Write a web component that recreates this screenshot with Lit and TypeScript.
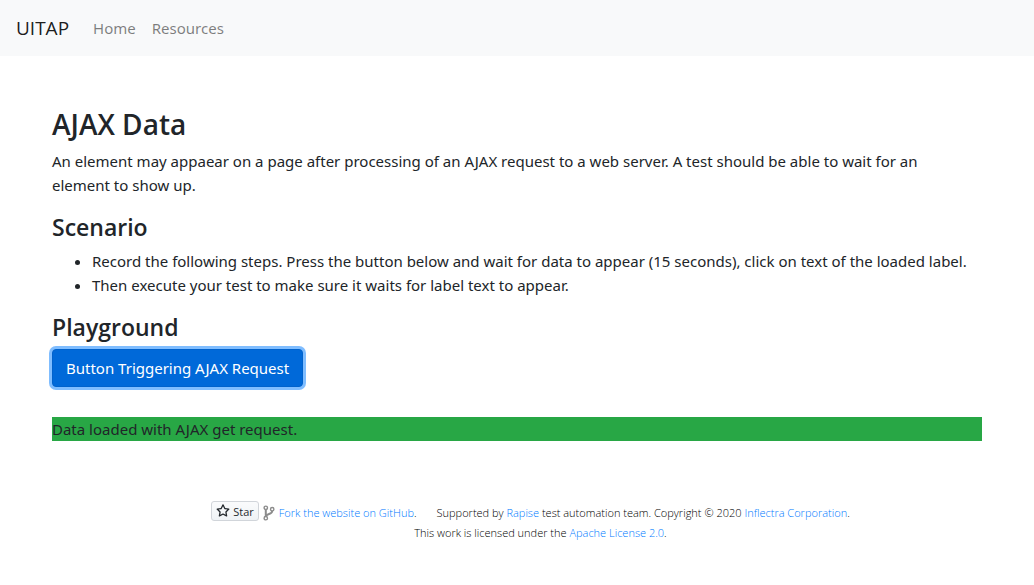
import { LitElement, html, css } from "lit";
import { customElement } from "lit/decorators.js";

@customElement("app-root")
export class AppRoot extends LitElement {
  static styles = css`
    :host {
      display: block;
      font-family: "Noto Sans", "Open Sans", sans-serif;
      font-size: 15px;
      line-height: 24px;
      color: #212529;
    }
    * { box-sizing: border-box; }
    a { color: #007bff; text-decoration: none; }
    .navbar {
      display: flex;
      align-items: center;
      padding: 8px 16px;
      min-height: 56px;
      background: #f8f9fa;
    }
    .brand {
      font-family: "Open Sans", sans-serif;
      font-size: 19px;
      line-height: 30px;
      color: rgba(0, 0, 0, 0.9);
      margin-right: 16px;
    }
    .links { display: flex; list-style: none; margin: 0; padding: 0; }
    .links a { display: block; padding: 8px; color: rgba(0, 0, 0, 0.5); }
    .container { max-width: 960px; margin: 0 auto; padding: 0 15px; }
    .page { padding-top: 51px; }
    h3, h4 {
      font-family: "Open Sans", sans-serif;
      font-weight: 600;
      margin: 0 0 8px;
    }
    h3 { font-size: 28px; line-height: 34px; }
    h4 { font-size: 23px; line-height: 28px; }
    p { margin: 0 0 16px; }
    .intro { padding-right: 16px; }
    .steps { margin: 0 0 16px; padding-left: 40px; }
    .primary {
      display: block;
      font: inherit;
      color: #fff;
      padding: 6px 13px;
      border: 1px solid #0062cc;
      border-radius: 4px;
      background: #0069d9;
      box-shadow: 0 0 0 3px rgba(0, 123, 255, 0.5);
      cursor: pointer;
    }
    .result { margin: 30px 0 0; background: #28a745; }
    .footer {
      padding-top: 58px;
      padding-left: 42px;
      font-family: "Open Sans", sans-serif;
      font-size: 11px;
      font-weight: 300;
      line-height: 20px;
      color: #000;
    }
    .row { display: flex; flex-wrap: wrap; justify-content: center; align-items: center; }
    .row + .row { padding-left: 20px; }
    .repo { display: flex; align-items: center; margin-right: 20px; }
    .row .text { padding-top: 4px; }
    .star {
      display: flex;
      align-items: center;
      gap: 3px;
      height: 20px;
      padding: 0 4px;
      margin-right: 4px;
      font: 400 11px "Open Sans", sans-serif;
      color: #24292e;
      border: 1px solid #d1d5da;
      border-radius: 3px;
      background: linear-gradient(#fafbfc, #eff3f6);
    }
    .fork { margin: 4px 4px 0 0; }
    svg { display: block; }
  `;

  render() {
    return html`
      <nav class="navbar">
        <a class="brand" href="#">UITAP</a>
        <ul class="links">
          <li><a href="#home">Home</a></li>
          <li><a href="#resources">Resources</a></li>
        </ul>
      </nav>
      <main class="container page">
        <h3>AJAX Data</h3>
        <p class="intro">An element may appaear on a page after processing of an AJAX request to a web server. A test should be able to wait for an element to show up.</p>
        <h4>Scenario</h4>
        <ul class="steps">
          <li>Record the following steps. Press the button below and wait for data to appear (15 seconds), click on text of the loaded label.</li>
          <li>Then execute your test to make sure it waits for label text to appear.</li>
        </ul>
        <h4>Playground</h4>
        <button class="primary" type="button">Button Triggering AJAX Request</button>
        <p class="result">Data loaded with AJAX get request.</p>
      </main>
      <footer class="container footer">
        <div class="row">
          <div class="repo">
            <a class="star" href="#star">
              <svg width="14" height="14" viewBox="0 0 16 16" fill="#24292e" aria-hidden="true">
                <path d="M8 .25a.75.75 0 0 1 .673.418l1.882 3.815 4.21.612a.75.75 0 0 1 .416 1.279l-3.046 2.97.719 4.192a.75.75 0 0 1-1.088.791L8 12.347l-3.766 1.98a.75.75 0 0 1-1.088-.79l.72-4.194L.818 6.374a.75.75 0 0 1 .416-1.28l4.21-.611L7.327.668A.75.75 0 0 1 8 .25zm0 2.445L6.615 5.5a.75.75 0 0 1-.564.41l-3.097.45 2.24 2.184a.75.75 0 0 1 .216.664l-.528 3.084 2.769-1.456a.75.75 0 0 1 .698 0l2.77 1.456-.53-3.084a.75.75 0 0 1 .216-.664l2.24-2.183-3.096-.45a.75.75 0 0 1-.564-.41L8 2.694z"/>
              </svg>
              Star
            </a>
            <svg class="fork" width="12" height="16" viewBox="0 0 12 16" fill="none" stroke="#8c8c8c" aria-hidden="true">
              <g stroke-width="1.4">
                <circle cx="2.8" cy="2.8" r="1.7"/>
                <circle cx="2.8" cy="13.2" r="1.7"/>
                <circle cx="9.2" cy="4.2" r="1.7"/>
              </g>
              <path stroke-width="2" d="M2.8 4.5v7M9.2 6c0 3.6-5.4 2.4-6.2 5.2"/>
            </svg>
            <span class="text"><a href="#fork">Fork the website on GitHub</a>.</span>
          </div>
          <span class="text">Supported by <a href="#rapise">Rapise</a> test automation team. Copyright © 2020 <a href="#inflectra">Inflectra Corporation</a>.</span>
        </div>
        <div class="row"><span>This work is licensed under the <a href="#license">Apache License 2.0</a>.</span></div>
      </footer>
    `;
  }
}
